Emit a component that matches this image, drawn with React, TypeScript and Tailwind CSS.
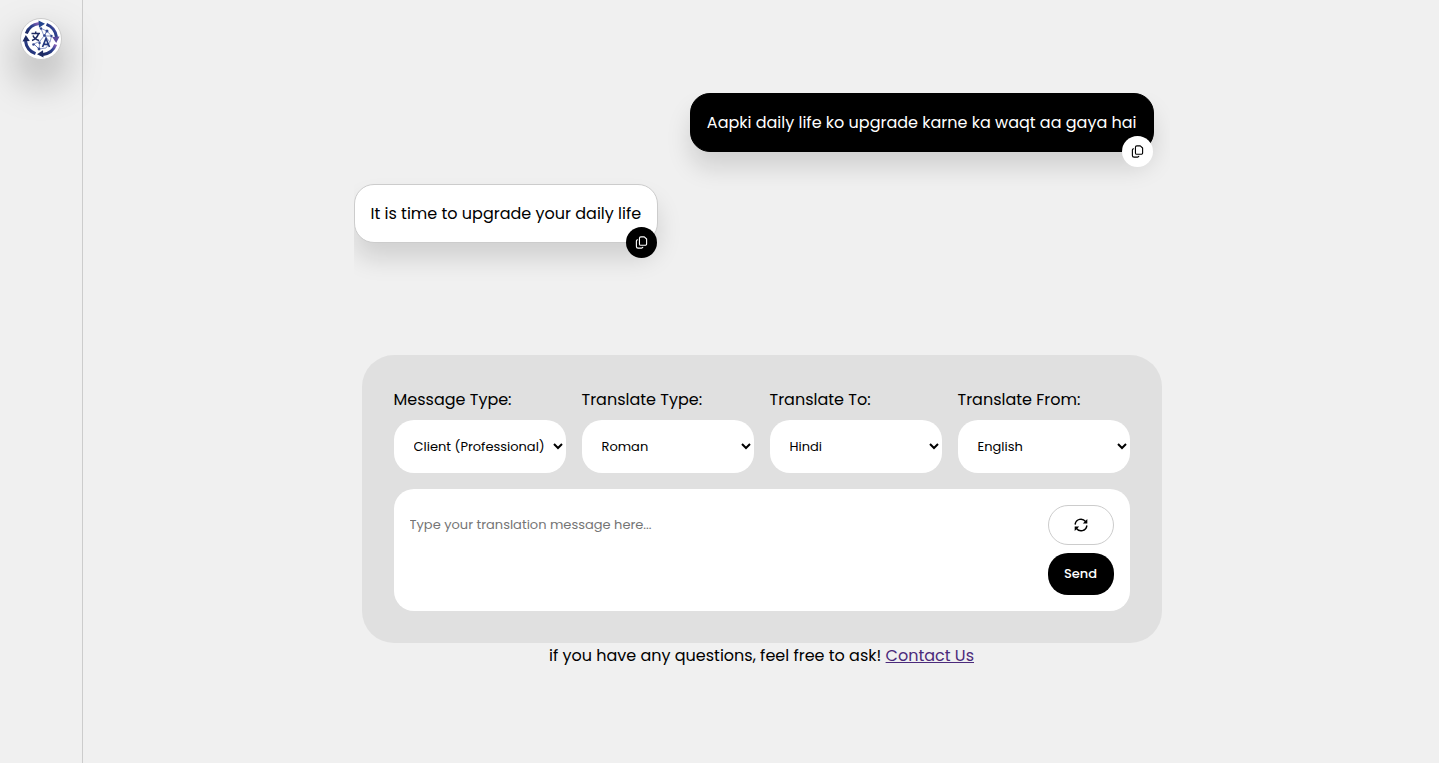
import React, { useState } from 'react';

interface Message {
  id: number;
  text: string;
  fromUser: boolean;
}

interface SelectFieldProps {
  id: string;
  label: string;
  options: string[];
}

const messages: Message[] = [
  { id: 1, text: 'Aapki daily life ko upgrade karne ka waqt aa gaya hai', fromUser: true },
  { id: 2, text: 'It is time to upgrade your daily life', fromUser: false },
];

const fields: SelectFieldProps[] = [
  { id: 'message-type', label: 'Message Type:', options: ['Client (Professional)', 'Friend (Casual)'] },
  { id: 'translate-type', label: 'Translate Type:', options: ['Roman', 'Native'] },
  { id: 'translate-to', label: 'Translate To:', options: ['Hindi', 'English'] },
  { id: 'translate-from', label: 'Translate From:', options: ['English', 'Hindi'] },
];

const Logo = () => (
  <svg viewBox="0 0 40 40" className="size-10" aria-hidden="true">
    <defs>
      <linearGradient id="ring" x1="0" y1="1" x2="1" y2="0">
        <stop offset="0" stopColor="#1d2a63" />
        <stop offset="0.6" stopColor="#2b3f8c" />
        <stop offset="1" stopColor="#8a63b8" />
      </linearGradient>
    </defs>
    {/* circling arrows */}
    <g fill="none" stroke="url(#ring)" strokeWidth="3">
      <path d="M5.3 14.5A15.7 15.7 0 0 1 18 4.5" />
      <path d="M25.5 5.3A15.7 15.7 0 0 1 35.5 18" />
      <path d="M34.7 25.5A15.7 15.7 0 0 1 22 35.5" />
      <path d="M14.5 34.7A15.7 15.7 0 0 1 4.5 22" />
    </g>
    <path d="M17.5 1.5l6.500 3.300-6 4z" fill="#24458f" />
    <path d="M38.500 17.500l-3.300 6.500-4-6z" fill="#5b4a9c" />
    <path d="M22.500 38.500l-6.500-3.300 6-4z" fill="#1d2a63" />
    <path d="M1.500 22.500l3.300-6.500 4 6z" fill="#1d2a63" />
    {/* network */}
    <g fill="none" stroke="#5f70b0" strokeWidth="0.7">
      <path d="M20 9.500l6 2.500 4.500 5-1.500 6-4 6-7 1-5-5 6-3 4-5 3-5M20 9.500l3 7.500 7.500 0M19 22l-1 8M13 25l5 5M26 12l-2.500 4.500 5.500 6.500" />
    </g>
    <g fill="#33488f">
      <circle cx="20" cy="9.500" r="1.200" />
      <circle cx="26" cy="12" r="1.500" />
      <circle cx="30.500" cy="17" r="1.200" />
      <circle cx="23.500" cy="16.500" r="1.300" />
      <circle cx="18.500" cy="24" r="1.200" />
      <circle cx="12.500" cy="25.500" r="1.300" />
      <circle cx="18" cy="30" r="1.400" />
    </g>
    <path d="M10.500 14.500h8.500M14.700 12.500v2M17.500 14.500c-1 4-3.500 6-6.500 7M12 16.500c1 3 3 4 6 5" fill="none" stroke="#1d2a63" strokeWidth="1.500" />
    <path d="M21.500 28l3.500-8.500 3.500 8.500M22.800 25.300h4.500" fill="none" stroke="#24397f" strokeWidth="1.700" />
  </svg>
);

const CopyIcon = () => (
  <svg viewBox="0 0 14 14" className="size-[13px]" fill="none" stroke="currentColor" strokeWidth="1.200" strokeLinecap="round" aria-hidden="true">
    <path d="M6.300 1h3.700l2.500 2.200v5.300a1.500 1.500 0 0 1-1.500 1.500H6.300a1.500 1.500 0 0 1-1.500-1.500v-6A1.500 1.500 0 0 1 6.300 1z" strokeLinejoin="round" />
    <path d="M2.800 4a1.500 1.500 0 0 0-1.300 1.500v5.700a1.800 1.800 0 0 0 1.800 1.800h3.700a1.500 1.500 0 0 0 1.400-.8" />
  </svg>
);

const RefreshIcon = () => (
  <svg viewBox="0 0 14 14" className="size-[14px]" aria-hidden="true">
    <g fill="none" stroke="currentColor" strokeWidth="1.400" strokeLinecap="round">
      <path d="M1.200 6A5.800 5.800 0 0 1 11.500 3.500" />
      <path d="M12.800 8A5.800 5.800 0 0 1 2.500 10.500" />
    </g>
    <path d="M13.300 1v4.500H8.800z" fill="currentColor" />
    <path d="M.7 13V8.500h4.500z" fill="currentColor" />
  </svg>
);

const Bubble: React.FC<{ message: Message }> = ({ message }) => (
  <div
    className={
      message.fromUser
        ? 'relative self-end rounded-[20px] border border-black bg-black p-4 text-white shadow-[0_16px_24px_rgba(0,0,0,0.13)]'
        : 'relative self-start rounded-[20px] border border-[#cccccc] bg-white p-4 text-black shadow-[0_16px_24px_rgba(0,0,0,0.13)]'
    }
  >
    <p className="leading-[25px]">{message.text}</p>
    <button
      type="button"
      aria-label="Copy message"
      className={
        message.fromUser
          ? 'absolute right-0 -bottom-4 flex size-[31px] items-center justify-center rounded-full bg-white text-black'
          : 'absolute right-0 -bottom-4 flex size-[31px] items-center justify-center rounded-full bg-black text-white'
      }
    >
      <CopyIcon />
    </button>
  </div>
);

const SelectField: React.FC<SelectFieldProps> = ({ id, label, options }) => (
  <div className="flex min-w-0 flex-1 flex-col gap-2">
    <label htmlFor={id} className="leading-[25px]">
      {label}
    </label>
    <select id={id} className="h-[53px] w-full rounded-[20px] bg-white pl-4 text-[13px] text-black">
      {options.map((option) => (
        <option key={option}>{option}</option>
      ))}
    </select>
  </div>
);

const App: React.FC = () => {
  const [text, setText] = useState('');

  return (
    <div className="flex min-h-screen gap-px bg-[#f0f0f0] font-['Poppins','Inter',sans-serif] text-base text-black">
      <aside className="w-[83px] shrink-0 border-r border-[#cccccc] px-5 py-[18px]">
        <a
          href="#"
          aria-label="Home"
          className="flex size-[42px] items-center justify-center rounded-full border border-[#cccccc] bg-white shadow-[0_20px_40px_rgba(0,0,0,0.35)]"
        >
          <Logo />
        </a>
      </aside>

      <main className="flex min-w-0 flex-1 flex-col items-center justify-center">
        <section className="flex h-[262px] w-full max-w-[816px] flex-col gap-8 overflow-y-auto pr-4">
          {messages.map((message) => (
            <Bubble key={message.id} message={message} />
          ))}
        </section>

        <form
          onSubmit={(e) => e.preventDefault()}
          className="flex w-full max-w-[800px] flex-col gap-4 rounded-[32px] bg-[#e0e0e0] p-8"
        >
          <div className="flex gap-4">
            {fields.map((field) => (
              <SelectField key={field.id} {...field} />
            ))}
          </div>
          <div className="flex gap-4 rounded-[20px] bg-white p-4">
            <textarea
              aria-label="Translation message"
              placeholder="Type your translation message here..."
              value={text}
              onChange={(e) => setText(e.target.value)}
              className="flex-1 resize-none py-2 text-[13px] leading-6 outline-none placeholder:text-[#757575]"
            />
            <div className="flex w-[66px] flex-col gap-2">
              <button
                type="button"
                aria-label="Reset"
                onClick={() => setText('')}
                className="flex h-10 items-center justify-center rounded-[20px] border border-[#cccccc] bg-white"
              >
                <RefreshIcon />
              </button>
              <button type="submit" className="h-[42px] rounded-[20px] bg-black text-[13px] font-medium text-white">
                Send
              </button>
            </div>
          </div>
        </form>

        <p className="pb-0.5 leading-[25px]">
          if you have any questions, feel free to ask!{' '}
          <a href="#contact" className="text-[#4b2a7b] underline">
            Contact Us
          </a>
        </p>
      </main>
    </div>
  );
};

export default App;
